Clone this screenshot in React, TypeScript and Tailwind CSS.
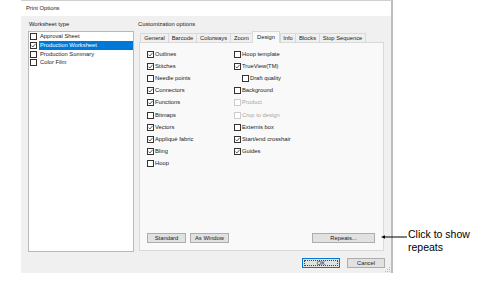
import * as React from "react";

// ─── Small parts ────────────────────────────────────────────

function Check({ on, disabled }: { on?: boolean; disabled?: boolean }) {
  return (
    <span
      className={`inline-flex items-center justify-center w-[7px] h-[7px] shrink-0 border bg-white ${
        disabled ? "border-[#cccccc]" : "border-[#333333]"
      }`}
    >
      {on && (
        <svg width="5" height="5" viewBox="0 0 5 5">
          <polyline points="0.5,2.6 1.9,4 4.6,0.8" fill="none" stroke="#333" strokeWidth="0.8" />
        </svg>
      )}
    </span>
  );
}

interface Opt {
  label: string;
  on?: boolean;
  disabled?: boolean;
  indent?: boolean;
}

function OptRow({ label, on, disabled, indent }: Opt) {
  return (
    <div className={`flex items-center h-[12.2px] gap-[1px] ${indent ? "ml-[8px]" : ""}`}>
      <Check on={on} disabled={disabled} />
      <span className={disabled ? "text-[#a6a6a6]" : "text-[#1a1a1a]"}>{label}</span>
    </div>
  );
}

function Btn({ children, w, primary }: { children: React.ReactNode; w: string; primary?: boolean }) {
  return (
    <div
      className={`${w} h-[10px] flex items-center justify-center bg-[#e1e1e1] border ${
        primary ? "border-[#0078d7] p-[1px]" : "border-[#adadad]"
      }`}
    >
      {primary ? (
        <div className="w-full h-full border border-dotted border-[#444] flex items-center justify-center leading-[5px]">
          {children}
        </div>
      ) : (
        children
      )}
    </div>
  );
}

// ─── Data ───────────────────────────────────────────────────

const sheets = [
  { label: "Approval Sheet", on: false },
  { label: "Production Worksheet", on: true, selected: true },
  { label: "Production Summary", on: false },
  { label: "Color Film", on: false },
];

const tabs = [
  { label: "General", w: "w-[29px]" },
  { label: "Barcode", w: "w-[29px]" },
  { label: "Colorways", w: "w-[35px]" },
  { label: "Zoom", w: "w-[23px]" },
  { label: "Design", w: "w-[28px]", active: true },
  { label: "Info", w: "w-[16px]" },
  { label: "Blocks", w: "w-[25px]" },
  { label: "Stop Sequence", w: "w-[47px]" },
];

const col1: Opt[] = [
  { label: "Outlines", on: true },
  { label: "Stitches", on: true },
  { label: "Needle points" },
  { label: "Connectors", on: true },
  { label: "Functions", on: true },
  { label: "Bitmaps" },
  { label: "Vectors", on: true },
  { label: "Appliqué fabric", on: true },
  { label: "Bling", on: true },
  { label: "Hoop" },
];

const col2: Opt[] = [
  { label: "Hoop template" },
  { label: "TrueView(TM)", on: true },
  { label: "Draft quality", indent: true },
  { label: "Background" },
  { label: "Product", disabled: true },
  { label: "Crop to design", disabled: true },
  { label: "Externis box" },
  { label: "Start/end crosshair", on: true },
  { label: "Guides", on: true },
];

// ─── App ────────────────────────────────────────────────────

export default function App() {
  return (
    <div
      className="relative w-[485px] h-[290px] bg-white overflow-hidden text-[5.8px] leading-[7px] text-[#1a1a1a]"
      style={{ fontFamily: '"Liberation Sans", Arial, sans-serif' }}
    >
      <div className="flex pl-[21px]">
        {/* Dialog */}
        <div className="w-[372px] h-[273px] flex flex-col border-t border-t-[#d0d0d0] border-r-2 border-r-[#bdbdbd]">
          <div className="h-[15px] bg-white flex items-center pl-[5px]">Print Options</div>

          <div className="flex-1 bg-[#f0f0f0] flex flex-col">
            <div className="flex pt-[5px]">
              {/* Worksheet type */}
              <div className="ml-[7px] w-[106px] flex flex-col">
                <div className="h-[7px] pl-[1px] mb-[3px]">Worksheet type</div>
                <div className="h-[221px] bg-white border border-[#b9b9b9] pt-[0.5px]">
                  {sheets.map((s) => (
                    <div key={s.label} className="flex items-center h-[8.67px] pl-[1px]">
                      <Check on={s.on} />
                      <div
                        className={`flex-1 h-full flex items-center pl-[1px] ml-[2px] ${
                          s.selected ? "bg-[#0078d7] text-white" : ""
                        }`}
                      >
                        {s.label}
                      </div>
                    </div>
                  ))}
                </div>
              </div>

              {/* Customization options */}
              <div className="ml-[5px] w-[245px] flex flex-col">
                <div className="h-[7px] -ml-[1px] mb-[3px]">Customization options</div>
                <div className="flex items-end h-[11px] pl-[1px]">
                  {tabs.map((t) =>
                    t.active ? (
                      <div
                        key={t.label}
                        className={`${t.w} h-[12px] -mb-[1px] relative z-10 bg-[#f9f9f9] border border-b-0 border-[#d9d9d9] flex items-center justify-center`}
                      >
                        {t.label}
                      </div>
                    ) : (
                      <div
                        key={t.label}
                        className={`${t.w} h-[9px] bg-[#f0f0f0] border border-b-0 border-[#d9d9d9] -mr-[1px] flex items-center justify-center`}
                      >
                        {t.label}
                      </div>
                    )
                  )}
                </div>
                <div className="h-[209px] bg-[#f9f9f9] border border-[#d9d9d9] flex flex-col pl-[7px] pr-[8px] pt-[5px] pb-[7px]">
                  <div className="flex flex-1">
                    <div className="w-[87px] flex flex-col">
                      {col1.map((o) => (
                        <OptRow key={o.label} {...o} />
                      ))}
                    </div>
                    <div className="flex flex-col">
                      {col2.map((o) => (
                        <OptRow key={o.label} {...o} />
                      ))}
                    </div>
                  </div>
                  <div className="flex items-center">
                    <Btn w="w-[39px]">Standard</Btn>
                    <div className="ml-[4px]">
                      <Btn w="w-[39px]">As Window</Btn>
                    </div>
                    <div className="ml-auto">
                      <Btn w="w-[63px]">Repeats...</Btn>
                    </div>
                  </div>
                </div>
              </div>
            </div>

            {/* OK / Cancel */}
            <div className="flex justify-end gap-[7px] pr-[6px] mt-[6px] relative">
              <Btn w="w-[38px]" primary>
                OK
              </Btn>
              <Btn w="w-[38px]">Cancel</Btn>
              <svg className="absolute right-[1px] top-[9px]" width="5" height="5" viewBox="0 0 5 5">
                <rect x="4" y="0" width="1" height="1" fill="#bbb" />
                <rect x="2" y="2" width="1" height="1" fill="#bbb" />
                <rect x="4" y="2" width="1" height="1" fill="#bbb" />
                <rect x="0" y="4" width="1" height="1" fill="#bbb" />
                <rect x="2" y="4" width="1" height="1" fill="#bbb" />
                <rect x="4" y="4" width="1" height="1" fill="#bbb" />
              </svg>
            </div>
          </div>
        </div>
      </div>

      {/* Callout */}
      <div className="absolute left-[380px] top-[228px] flex items-start">
        <svg width="28" height="18" viewBox="0 0 28 18">
          <line x1="3" y1="9" x2="27" y2="9" stroke="#000" strokeWidth="1" />
          <polygon points="1,9 5,7.3 5,10.7" fill="#000" />
        </svg>
        <div className="text-[10.5px] leading-[12.5px] text-black">
          Click to show
          <br />
          repeats
        </div>
      </div>
    </div>
  );
}
